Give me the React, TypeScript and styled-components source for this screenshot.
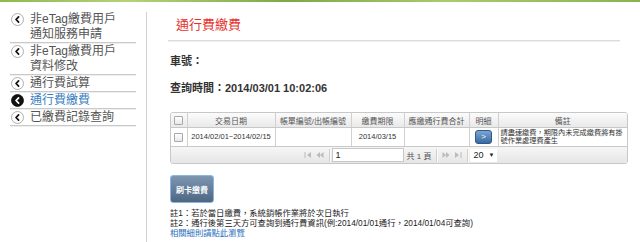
import React from 'react';
import styled, { createGlobalStyle } from 'styled-components';

const GlobalStyle = createGlobalStyle`
  html, body {
    margin: 0;
    padding: 0;
    background: #fff;
  }
  body {
    font-family: "Liberation Sans", "Noto Sans CJK TC", sans-serif;
    color: #333;
  }
`;

const LeafStrip = styled.div`
  height: 2px;
  background: linear-gradient(90deg, #8fb84e, #b5d27a 20%, #7ea845 45%, #aacb6a 70%, #8ab34c);
`;

const Layout = styled.div`
  display: flex;
  align-items: stretch;
  min-height: 240px;
`;

const Sidebar = styled.ul`
  list-style: none;
  margin: 9px 0 0 10px;
  padding: 0;
  width: 126px;
  flex: none;
`;

const NavItem = styled.li<{ $active?: boolean }>`
  display: flex;
  align-items: flex-start;
  gap: 6px;
  padding: 1px 0 0 1px;
  border-bottom: 1px solid #c9c9c9;
  box-shadow: 0 1px 0 #efefef;
  font-size: 12px;
  line-height: 15px;
  color: ${({ $active }) => ($active ? '#3b7fc1' : '#555')};
`;

const NavIcon = styled.svg`
  flex: none;
  width: 13px;
  height: 13px;
  margin-top: 1px;
`;

const Main = styled.main`
  flex: 1;
  margin: 10px 0 0 10px;
  padding-left: 23px;
  border-left: 1px solid #d0d0d0;
`;

const Title = styled.h2`
  margin: 5px 0 0;
  padding-left: 6px;
  font-size: 13px;
  line-height: 16px;
  font-weight: normal;
  color: #e5322d;
`;

const Rule = styled.div`
  margin: 7px 0 0 -2px;
  width: 452px;
  border-top: 1px solid #dcdcdc;
  border-bottom: 1px solid #f0f0f0;
`;

const InfoLine = styled.div<{ $gap: number }>`
  margin-top: ${({ $gap }) => $gap}px;
  font-size: 11px;
  line-height: 14px;
  font-weight: bold;
  color: #333;
`;

const Grid = styled.div`
  margin-top: 17px;
  width: 456px;
  border: 1px solid #c8c8c8;
  border-radius: 3px;
  overflow: hidden;
`;

const Table = styled.table`
  width: 100%;
  border-collapse: collapse;
  table-layout: fixed;
`;

const HeadCell = styled.th`
  height: 14px;
  padding: 0;
  font-size: 8px;
  font-weight: normal;
  color: #555;
  text-align: center;
  background: linear-gradient(#fbfbfb, #e9e9e9);
  border-right: 1px solid #d0d0d0;
  border-bottom: 1px solid #c8c8c8;
  &:last-child {
    border-right: none;
  }
`;

const Cell = styled.td<{ $note?: boolean }>`
  height: 18px;
  padding: ${({ $note }) => ($note ? '0 1px 0 2px' : '0 2px')};
  font-size: ${({ $note }) => ($note ? '7.2px' : '7.5px')};
  line-height: 8.5px;
  color: #333;
  text-align: ${({ $note }) => ($note ? 'left' : 'center')};
  border-right: 1px solid #d0d0d0;
  border-bottom: 1px solid #c8c8c8;
  &:last-child {
    border-right: none;
  }
`;

const Check = styled.span`
  display: inline-block;
  width: 7px;
  height: 7px;
  border: 1px solid #a8a8a8;
  border-radius: 1px;
  background: linear-gradient(#fff, #e8e8e8);
  vertical-align: middle;
`;

const DetailButton = styled.button`
  width: 17px;
  height: 14px;
  padding: 0;
  border: 1px solid #2d5b8d;
  border-radius: 3px;
  background: linear-gradient(#7aa6d6, #3a6aa0);
  color: #fff;
  font-size: 8px;
  line-height: 12px;
  font-family: "Liberation Sans", sans-serif;
`;

const Pager = styled.div`
  display: flex;
  align-items: center;
  justify-content: center;
  height: 16px;
  background: linear-gradient(#f6f6f6, #e6e6e6);
  font-size: 8px;
  color: #555;
`;

const PagerIcons = styled.span`
  display: flex;
  gap: 4px;
  padding: 0 3px;
  color: #bbb;
`;

const PagerSep = styled.span`
  width: 1px;
  height: 13px;
  margin: 0 2px;
  background: #d0d0d0;
  box-shadow: 1px 0 0 #fafafa;
`;

const PageInput = styled.span`
  width: 67px;
  height: 12px;
  padding-left: 3px;
  border: 1px solid #c8c8c8;
  background: #fff;
  font-size: 9px;
  line-height: 12px;
  color: #222;
`;

const PageCount = styled.span`
  padding: 0 3px;
`;

const PageSize = styled.span`
  display: flex;
  align-items: center;
  justify-content: space-between;
  width: 21px;
  height: 13px;
  padding: 0 3px;
  background: #fff;
  font-size: 9px;
  color: #222;
`;

const Caret = styled.span`
  font-size: 6px;
`;

const PayButton = styled.button`
  margin-top: 11px;
  width: 44px;
  height: 28px;
  padding: 0;
  border: 1px solid #8db5e2;
  border-radius: 3px;
  background: linear-gradient(#7e97b1, #4d6682);
  color: #fff;
  font-size: 8px;
  font-weight: bold;
  font-family: "Liberation Sans", "Noto Sans CJK TC", sans-serif;
`;

const Notes = styled.div`
  margin-top: 5px;
  font-size: 8.3px;
  line-height: 10px;
  color: #222;
`;

const Link = styled.a`
  color: #2b6fbd;
  text-decoration: none;
`;

const Chevron = ({ active }: { active?: boolean }) => (
  <NavIcon viewBox="0 0 13 13">
    <circle cx="6.5" cy="6.5" r="6" fill={active ? '#111' : '#fff'} stroke={active ? '#111' : '#9a9a9a'} strokeWidth="0.8" />
    <path d="M7.6 3.8 L5 6.5 L7.6 9.2" fill="none" stroke={active ? '#fff' : '#111'} strokeWidth="1.7" strokeLinecap="round" strokeLinejoin="round" />
  </NavIcon>
);

const Tri = ({ dir, bar }: { dir: 'l' | 'r'; bar?: boolean }) => (
  <svg width="8" height="6" viewBox="0 0 8 6">
    {dir === 'l' ? (
      bar ? (
        <>
          <rect x="0.5" y="0" width="1" height="6" fill="currentColor" />
          <path d="M7 0 L3 3 L7 6 Z" fill="currentColor" />
        </>
      ) : (
        <>
          <path d="M4 0 L0.5 3 L4 6 Z" fill="currentColor" />
          <path d="M7.5 0 L4 3 L7.5 6 Z" fill="currentColor" />
        </>
      )
    ) : bar ? (
      <>
        <path d="M1 0 L5 3 L1 6 Z" fill="currentColor" />
        <rect x="6.5" y="0" width="1" height="6" fill="currentColor" />
      </>
    ) : (
      <>
        <path d="M0.5 0 L4 3 L0.5 6 Z" fill="currentColor" />
        <path d="M4 0 L7.5 3 L4 6 Z" fill="currentColor" />
      </>
    )}
  </svg>
);

const navItems = [
  { label: ['非eTag繳費用戶', '通知服務申請'] },
  { label: ['非eTag繳費用戶', '資料修改'] },
  { label: ['通行費試算'] },
  { label: ['通行費繳費'], active: true },
  { label: ['已繳費記錄查詢'] },
];

const columns = [
  { w: 16, title: <Check /> },
  { w: 88, title: '交易日期' },
  { w: 76, title: '帳單編號/出帳編號' },
  { w: 53, title: '繳費期限' },
  { w: 65, title: '應繳通行費合計' },
  { w: 29, title: '明細' },
  { w: 129, title: '備註' },
];

export default function App() {
  return (
    <>
      <GlobalStyle />
      <LeafStrip />
      <Layout>
        <Sidebar>
          {navItems.map((item, i) => (
            <NavItem key={i} $active={item.active}>
              <Chevron active={item.active} />
              <span>
                {item.label.map((line, j) => (
                  <div key={j}>{line}</div>
                ))}
              </span>
            </NavItem>
          ))}
        </Sidebar>
        <Main>
          <Title>通行費繳費</Title>
          <Rule />
          <InfoLine $gap={12}>車號：</InfoLine>
          <InfoLine $gap={13}>查詢時間：2014/03/01 10:02:06</InfoLine>
          <Grid>
            <Table>
              <colgroup>
                {columns.map((c, i) => (
                  <col key={i} style={{ width: c.w }} />
                ))}
              </colgroup>
              <thead>
                <tr>
                  {columns.map((c, i) => (
                    <HeadCell key={i}>{c.title}</HeadCell>
                  ))}
                </tr>
              </thead>
              <tbody>
                <tr>
                  <Cell>
                    <Check />
                  </Cell>
                  <Cell>2014/02/01~2014/02/15</Cell>
                  <Cell />
                  <Cell>2014/03/15</Cell>
                  <Cell />
                  <Cell>
                    <DetailButton>&gt;</DetailButton>
                  </Cell>
                  <Cell $note>請盡速繳費，期限內未完成繳費將有掛號作業處理費產生</Cell>
                </tr>
              </tbody>
            </Table>
            <Pager>
              <PagerIcons>
                <Tri dir="l" bar />
                <Tri dir="l" />
              </PagerIcons>
              <PagerSep />
              <PageInput>1</PageInput>
              <PageCount>共 1 頁</PageCount>
              <PagerSep />
              <PagerIcons>
                <Tri dir="r" />
                <Tri dir="r" bar />
              </PagerIcons>
              <PagerSep />
              <PageSize>
                <span>20</span>
                <Caret>▼</Caret>
              </PageSize>
            </Pager>
          </Grid>
          <PayButton>刷卡繳費</PayButton>
          <Notes>
            <div>註1：若於當日繳費，系統銷帳作業將於次日執行</div>
            <div>註2：通行後第三天方可查詢到通行費資訊(例:2014/01/01通行，2014/01/04可查詢)</div>
            <Link href="#">相關細則請點此瀏覽</Link>
          </Notes>
        </Main>
      </Layout>
    </>
  );
}
